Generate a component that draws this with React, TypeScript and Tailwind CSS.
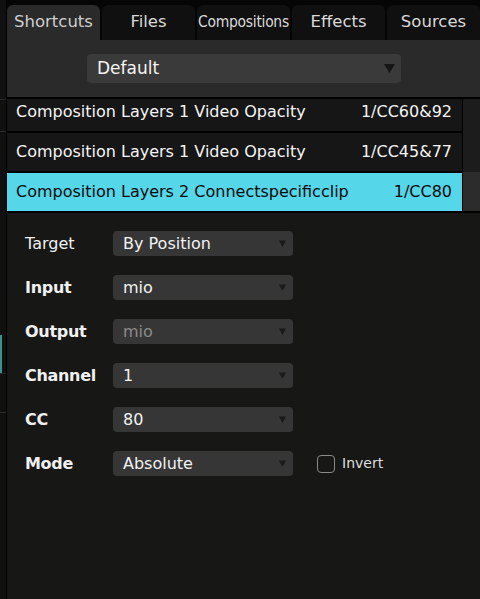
import type { ReactNode } from "react";

const FONT = { fontFamily: '"DejaVu Sans", "Noto Sans", sans-serif' };

const tabs = ["Shortcuts", "Files", "Compositions", "Effects", "Sources"];

const shortcuts = [
  { name: "Composition Layers 1 Video Opacity", value: "1/CC60&92" },
  { name: "Composition Layers 1 Video Opacity", value: "1/CC45&77" },
  { name: "Composition Layers 2 Connectspecificclip", value: "1/CC80", selected: true },
];

function Arrow({ big }: { big?: boolean }) {
  return big ? (
    <svg width="11" height="9" viewBox="0 0 11 9" className="shrink-0">
      <path d="M0 0 H11 L5.5 9 Z" fill="#151515" />
    </svg>
  ) : (
    <svg width="7" height="7" viewBox="0 0 7 7" className="shrink-0">
      <path d="M0 0.5 H7 L3.5 7 Z" fill="#1a1a1a" />
    </svg>
  );
}

function Select({ value, disabled }: { value: string; disabled?: boolean }) {
  return (
    <div className="flex h-[25px] w-[180px] items-center justify-between rounded-[4px] bg-[#363636] pl-[10px] pr-[7px]">
      <span className={`text-[16px] leading-none ${disabled ? "text-[#8a8a8a]" : "text-[#f2f2f2]"}`}>
        {value}
      </span>
      <Arrow />
    </div>
  );
}

function FormRow({ label, bold, children }: { label: string; bold?: boolean; children: ReactNode }) {
  return (
    <div className="flex h-[25px] items-center">
      <span className={`w-[88px] text-[16px] text-[#f0f0f0] ${bold ? "font-bold tracking-[-0.3px]" : ""}`}>
        {label}
      </span>
      {children}
    </div>
  );
}

function LeftStrip() {
  return (
    <div className="flex w-[6px] shrink-0 flex-col bg-[#101010]">
      <div className="h-[99px]" />
      <div className="h-px bg-[#2a2a2a]" />
      <div className="h-[31px]" />
      <div className="h-px bg-[#2a2a2a]" />
      <div className="h-[203px]" />
      <div className="flex h-[38px]">
        <div className="w-[2px] bg-[#3f8f8c]" />
      </div>
      <div className="h-px bg-[#2a2a2a]" />
      <div className="h-[38px]" />
      <div className="h-px bg-[#2a2a2a]" />
      <div className="flex-1" />
    </div>
  );
}

export default function App() {
  return (
    <div className="flex h-[599px] w-[480px] overflow-hidden bg-black" style={FONT}>
      <LeftStrip />
      <div className="w-px shrink-0 bg-black" />
      <div className="flex min-w-0 flex-1 flex-col">
        {/* tab bar */}
        <div className="flex h-[40px] shrink-0 items-end gap-[2px] bg-[#050505] pt-[5px]">
          {tabs.map((t, i) => (
            <div
              key={t}
              className={`flex h-full flex-1 items-center justify-center rounded-t-[6px] ${
                i === 0 ? "bg-[#2a2a2a] text-[#cfcfcf]" : "bg-[#101010] text-[#dadada]"
              }`}
            >
              <span
                className={i === 2 ? "text-[15.5px] tracking-[-0.3px]" : "text-[16.5px]"}
                style={i === 2 ? { fontFamily: '"DejaVu Sans Condensed", "DejaVu Sans", sans-serif' } : undefined}
              >
                {t}
              </span>
            </div>
          ))}
        </div>

        {/* preset dropdown */}
        <div className="flex h-[57px] shrink-0 items-center bg-[#2a2a2a] pl-[80px]">
          <div className="flex h-[29px] w-[314px] items-center justify-between rounded-[4px] bg-[#3a3a3a] pl-[10px] pr-[6px]">
            <span className="text-[17px] leading-none text-[#f4f4f4]">Default</span>
            <Arrow big />
          </div>
        </div>
        <div className="h-[2px] shrink-0 bg-black" />

        {/* shortcut list */}
        <div className="flex h-[112px] shrink-0 overflow-hidden bg-black">
          <div className="flex min-w-0 flex-1 flex-col gap-[2px] -mt-[6px]">
            {shortcuts.map((s, i) => (
              <div
                key={i}
                className={`flex h-[38px] shrink-0 items-center justify-between pl-[9px] pr-[10px] text-[16px] ${
                  s.selected ? "bg-[#56d6e9] text-[#0a0a0a]" : "bg-[#161616] text-[#f4f4f4]"
                }`}
              >
                <span className="truncate">{s.name}</span>
                <span className="shrink-0 pl-3">{s.value}</span>
              </div>
            ))}
          </div>
          <div className="ml-px flex w-[17px] shrink-0 flex-col bg-[#1c1c1c]">
            <div className="h-[73px]" />
            <div className="h-[39px] bg-[#2c2c2c]" />
          </div>
        </div>
        <div className="h-[2px] shrink-0 bg-black" />

        {/* mapping form */}
        <div className="flex flex-1 flex-col gap-[19px] bg-[#171716] pl-[18px] pt-[18px]">
          <FormRow label="Target">
            <Select value="By Position" />
          </FormRow>
          <FormRow label="Input" bold>
            <Select value="mio" />
          </FormRow>
          <FormRow label="Output" bold>
            <Select value="mio" disabled />
          </FormRow>
          <FormRow label="Channel" bold>
            <Select value="1" />
          </FormRow>
          <FormRow label="CC" bold>
            <Select value="80" />
          </FormRow>
          <FormRow label="Mode" bold>
            <Select value="Absolute" />
            <div className="ml-[24px] flex items-center gap-[7px]">
              <div className="h-[18px] w-[18px] rounded-[4px] border-[1.5px] border-[#8a8a8a]" />
              <span className="text-[14px] text-[#dedede]">Invert</span>
            </div>
          </FormRow>
        </div>
      </div>
    </div>
  );
}
